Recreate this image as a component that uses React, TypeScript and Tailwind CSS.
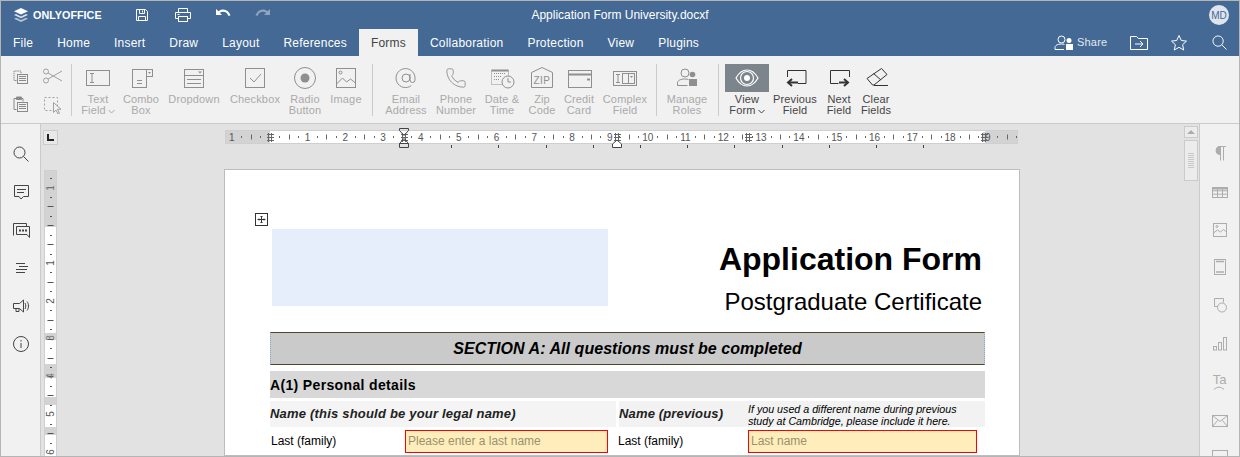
import React from "react";
import { Phone } from "lucide-react";

const Ico = ({ w = 32, h = 28, children, className = "" }: { w?: number; h?: number; children: React.ReactNode; className?: string }) => (
  <svg width={w} height={h} viewBox={`0 0 ${w} ${h}`} fill="none" stroke="currentColor" strokeWidth={1} className={className}>
    {children}
  </svg>
);

const icons: Record<string, React.ReactNode> = {
  text: <Ico><rect x="4.5" y="6.5" width="23" height="15" /><path d="M8 9.5h4M10 9.5v9M8 18.5h4" /></Ico>,
  combo: (
    <Ico>
      <rect x="7.5" y="5.5" width="14" height="18" /><rect x="21.5" y="5.5" width="6" height="7" />
      <path d="M12 16.5h5M12 19.5h5" /><path d="M23 8h3l-1.5 2z" fill="currentColor" stroke="none" />
    </Ico>
  ),
  drop: (
    <Ico>
      <rect x="6.5" y="5.5" width="19" height="18" /><path d="M6.5 11.5h19M9 15.5h14M9 19.5h14" />
      <path d="M20 7.5h4l-2 2z" fill="currentColor" stroke="none" />
    </Ico>
  ),
  check: <Ico><rect x="6.5" y="4.5" width="19" height="19" /><path d="M11 14l4 4 7-8" /></Ico>,
  radio: <Ico><circle cx="16" cy="14" r="10.5" /><circle cx="16" cy="14" r="4.5" fill="currentColor" stroke="none" /></Ico>,
  image: <Ico><rect x="6.5" y="4.5" width="19" height="19" /><circle cx="10.5" cy="8.5" r="1.5" /><path d="M6.5 20l6-6 4 4 4-3 5 4" /></Ico>,
  email: <Ico><circle cx="16" cy="14" r="4" /><path d="M20 10v6a2.5 2.5 0 0 0 5 0v-2a9.5 9.5 0 1 0-3.7 7.6" /></Ico>,
  phone: <Phone size={22} strokeWidth={1} className="mt-[3px]" />,
  date: (
    <Ico>
      <rect x="5.5" y="6.5" width="17" height="14" strokeDasharray="1 1" /><path d="M5.5 6.5h17" strokeWidth="2" />
      <path d="M8 9.5h11M8 12.5h8M8 15.5h6" strokeDasharray="1 1" />
      <circle cx="22" cy="18" r="6" fill="#f1f1f1" /><path d="M22 14v4h3" />
    </Ico>
  ),
  zip: (
    <Ico>
      <path d="M5.5 23.5V8.5L16 3.5l10.5 5v15z" />
      <text x="16" y="20" textAnchor="middle" fontSize="10" fill="currentColor" stroke="none" letterSpacing="0.5">ZIP</text>
    </Ico>
  ),
  credit: <Ico><rect x="5.5" y="6.5" width="23" height="17" /><path d="M5.5 10.5h23" strokeWidth="2" /><path d="M24 15.5h3" strokeWidth="2" /></Ico>,
  complex: (
    <Ico>
      <rect x="4.5" y="7.5" width="23" height="14" /><path d="M7 10.5h4M9 10.5v8M7 18.5h4" />
      <rect x="13.5" y="9.5" width="6" height="10" /><rect x="19.5" y="9.5" width="6" height="10" />
      <path d="M21 12h3l-1.5 2z" fill="currentColor" stroke="none" />
    </Ico>
  ),
  roles: (
    <Ico>
      <circle cx="14" cy="9" r="4" /><path d="M6.5 21.5v-2.5c0-2.5 3-4 7.5-4 1.5 0 2.5.1 3.5.5M6.5 21.5h10" />
      <circle cx="21.5" cy="10.5" r="2.8" fill="currentColor" stroke="none" /><rect x="18" y="15" width="8" height="7" fill="currentColor" stroke="none" />
    </Ico>
  ),
  view: (
    <Ico>
      <path d="M5 14c3-5.5 7-8 11-8s8 2.5 11 8c-3 5.5-7 8-11 8s-8-2.5-11-8z" strokeWidth="1.2" />
      <circle cx="16" cy="14" r="6.5" strokeWidth="1.2" /><circle cx="16" cy="14" r="3" fill="currentColor" stroke="none" />
    </Ico>
  ),
  prev: (
    <Ico>
      <path d="M8.5 13V6.5h18.5v13h-8" />
      <path d="M19 18.5H9.5" strokeWidth="2" /><path d="M13 15l-4 3.5 4 3.5" strokeWidth="2" />
    </Ico>
  ),
  next: (
    <Ico>
      <path d="M26.5 13V6.5H7.5v13h8" />
      <path d="M16 18.5h9" strokeWidth="2" /><path d="M21 15l4 3.5-4 3.5" strokeWidth="2" />
    </Ico>
  ),
  clear: <Ico><path d="M7 14.5L21.5 4.5l5.5 6-13 10.5h-1.5z" /><path d="M13.5 9.5l7.5 6.5M14 21.5h14" /></Ico>,
};

const first = [
  { i: "text", a: "Text", b: "Field", c: true, w: "w-[44px]" },
  { i: "combo", a: "Combo", b: "Box", w: "w-[42px]" },
  { i: "drop", a: "Dropdown", w: "w-[64px]" },
  { i: "check", a: "Checkbox", w: "w-[58px]" },
  { i: "radio", a: "Radio", b: "Button", w: "w-[42px]" },
  { i: "image", a: "Image", w: "w-[40px]" },
];

const Chev = () => (
  <svg width="7" height="5" viewBox="0 0 7 5" fill="none" stroke="currentColor" className="mt-[2px]"><path d="M.5 1l3 3 3-3" /></svg>
);

const Btn = ({ i, a, b, c, w, on, dark }: { i: string; a: string; b?: string; c?: boolean; w: string; on?: boolean; dark?: boolean }) => (
  <div className={`${w} flex flex-col items-center`}>
    <div className={`h-[28px] w-full flex justify-center ${on ? "bg-[#7d858c] text-white" : dark ? "text-[#333333]" : "text-[#8f8f8f]"}`}>{icons[i]}</div>
    <div className={`mt-[2px] text-[11px] leading-[11px] text-center whitespace-nowrap tracking-[0.15px] ${dark ? "text-[#444444]" : "text-[#aaaaaa]"}`}>
      <div className="h-[11px]">{a}</div>
      {b && <div className="h-[11px] flex justify-center items-center gap-[2px]">{b}{c && <Chev />}</div>}
    </div>
  </div>
);

const Sep = ({ cls }: { cls: string }) => <div className={`w-px h-[52px] bg-[#cbcbcb] shrink-0 ${cls}`} />;

const ClipIcons = () => (
  <div className="w-[70px] shrink-0 grid grid-cols-2 grid-rows-[20px_20px] content-start gap-y-[8px] mt-[2px] pl-[6px] text-[#8a8a8a]">
    <svg width="30" height="20" viewBox="0 0 30 20" fill="none" stroke="currentColor">
      <path d="M9.5 14.5h-2.500v-9.500h7v3" strokeDasharray="1.5 .7" /><rect x="10.5" y="8.5" width="10" height="9" /><path d="M12 10.5h7M12 12.5h7M12 14.5h7" />
    </svg>
    <svg width="30" height="20" viewBox="2 0 30 20" fill="none" stroke="#a0a0a0">
      <circle cx="9" cy="5.5" r="2.5" /><circle cx="9" cy="14.5" r="2.5" /><path d="M11 7l14 8M11 13l14-8" />
    </svg>
    <svg width="30" height="20" viewBox="0 0 30 20" fill="none" stroke="currentColor">
      <path d="M9.5 15.500h-2.500v-11h9v3" /><path d="M9.5 3h5v2.500h-5z" fill="currentColor" /><rect x="10.5" y="8.500" width="10" height="9" /><path d="M12 10.500h7M12 12.500h7M12 14.500h7" />
    </svg>
    <svg width="30" height="20" viewBox="0 0 30 20" fill="none" stroke="#a0a0a0">
      <rect x="5.5" y="3.5" width="13" height="13" strokeDasharray="2 2" /><path d="M14.5 8.5v10l2.500-2.500 2 4 1.500-.7-2-4h3.500z" fill="#f1f1f1" />
    </svg>
  </div>
);

const Ruler = () => {
  const o = 269.7 - 225;
  const s = 37.8;
  const nums = [-1, 1, 2, 3, 4, 5, 6, 7, 8, 9, 10, 11, 12, 13, 14, 15, 16, 17, 18, 19];
  const ticks: number[] = [];
  for (let k = -1; k < 20; k++) ticks.push(k);
  const hatch = [45, 179, 392, 523, 759];
  return (
    <svg width="795" height="24" viewBox="0 0 795 24" className="block overflow-visible" fontFamily="'Liberation Sans', sans-serif">
      <rect x=".5" y="2.5" width="792" height="13" fill="#ffffff" stroke="#cfcfcf" />
      <rect x="1" y="3" width="44" height="12" fill="#d3d3d3" />
      <rect x="760" y="3" width="32" height="12" fill="#d3d3d3" />
      {ticks.map((k) => {
        const x = o + k * s;
        return (
          <g key={k} stroke="#666666">
            {x + 9.45 > 0 && x + 9.45 < 792 && <path d={`M${Math.round(x + 9.45) + 0.5} 8v2`} />}
            {x + 18.9 > 0 && x + 18.9 < 792 && <path d={`M${Math.round(x + 18.9) + 0.5} 6.5v5`} />}
            {x + 28.35 > 0 && x + 28.35 < 792 && <path d={`M${Math.round(x + 28.35) + 0.5} 8v2`} />}
          </g>
        );
      })}
      {nums.map((n) => (
        <g key={n}>
          <rect x={o + n * s - 5} y="4" width="10" height="10" fill={n === -1 || n === 19 ? "#d3d3d3" : "#ffffff"} />
          <text x={o + n * s} y="13" fontSize="10" textAnchor="middle" fill="#555555">{n < 0 ? 1 : n === 19 ? 9 : n}</text>
        </g>
      ))}
      {hatch.map((x) => (
        <path key={x} d={`M${x - 3} 6.5h7M${x - 3} 9.5h7M${x - 3} 12.5h7M${x - 1.5} 5v9M${x + 1.5} 5v9`} stroke="#666666" fill="none" />
      ))}
      <path d="M174.5 .5h9v2l-4.5 5-4.5-5z M174.5 15.5l4.5-5 4.5 5v4h-9z M174.5 15.5h9" fill="none" stroke="#444444" />
      <path d="M387.5 19.5v-3.5l4.5-4 4.5 4v3.5z" fill="#fff" stroke="#444444" />
      {[226, 273, 321, 368, 415, 462, 509, 557, 604, 651, 698].map((x) => (
        <path key={x} d={`M${x + 0.5} 17v3`} stroke="#444444" />
      ))}
    </svg>
  );
};

const VRuler = () => {
  const white = [[227, 333], [340, 364], [378, 397], [405, 427], [435, 460]];
  const base = 170;
  const nums: [number, string, string][] = [
    [188, "1", "#777777"], [263, "1", "#555555"], [301, "2", "#555555"], [338, "3", "#777777"], [376, "4", "#777777"], [414, "5", "#555555"], [452, "6", "#555555"],
  ];
  const ticks: number[] = [];
  for (let y = 178; y < 460; y += 9.45) ticks.push(y);
  return (
    <svg width="13" height="290" viewBox="0 0 13 290" className="block shrink-0" fontFamily="'Liberation Sans', sans-serif">
      <rect x=".5" y=".5" width="12" height="295" fill="#d3d3d3" stroke="#cfcfcf" />
      <path d="M1 200h11" stroke="#cfcfcf" />
      {white.map(([a, b]) => <rect key={a} x="1" y={a - base} width="11" height={b - a} fill="#ffffff" />)}
      {ticks.map((y, idx) => (
        <path key={idx} d={idx % 2 === 1 ? `M3.5 ${Math.round(y - base) + 0.5}h6` : `M6 ${Math.round(y - base) + 0.5}h2`} stroke="#555555" />
      ))}
      {nums.map(([y, t, c]) => (
        <g key={y}>
          <rect x="2" y={y - base - 4} width="9" height="9" fill={y === 338 || y === 376 || y === 188 ? "transparent" : "#ffffff"} />
          <text transform={`translate(10 ${y - base}) rotate(-90)`} fontSize="10" textAnchor="middle" fill={c}>{t}</text>
        </g>
      ))}
    </svg>
  );
};

const LeftIcon = ({ children }: { children: React.ReactNode }) => (
  <div className="h-[38px] shrink-0 flex items-center justify-center text-[#444444]">{children}</div>
);
const RightIcon = ({ children }: { children: React.ReactNode }) => (
  <div className="h-[38px] shrink-0 flex flex-col items-center justify-center leading-none">{children}</div>
);
const S = ({ children, size = 20 }: { children: React.ReactNode; size?: number }) => (
  <svg width={size} height={size} viewBox="0 0 20 20" fill="none" stroke="currentColor">{children}</svg>
);

export default function App() {
  return (
    <div className="w-[1240px] h-[457px] overflow-hidden border border-[#b5b5b5] flex flex-col bg-[#f1f1f1] font-['Liberation_Sans',Arial,sans-serif]">
      {/* top */}
      <div className="bg-[#446995] text-white h-[55px] shrink-0 flex flex-col">
        <div className="h-[28px] flex items-center relative">
          <div className="pl-[12px] flex items-center gap-[4px] w-[126px]">
            <svg width="16" height="16" viewBox="0 0 16 16" fill="#fff">
              <path d="M8 1l7 3.2-7 3.3-7-3.3z" />
              <path d="M3 7l5 2.4L13 7l2 1-7 3.3L1 8z" opacity=".8" />
              <path d="M3 10.7l5 2.3 5-2.3 2 1-7 3.3-7-3.3z" opacity=".6" />
            </svg>
            <span className="text-[10.8px] font-bold">ONLYOFFICE</span>
          </div>
          <div className="flex">
            <div className="w-[30px] flex justify-center">
              <svg width="16" height="16" viewBox="0 0 16 16" fill="none" stroke="#fff"><path d="M2.5 2.5h9l2 2v9h-11z" /><path d="M5.5 2.5v4h5v-4M4.5 13.5v-4h7v4M8.5 3.5v2" /></svg>
            </div>
            <div className="w-[41px] ml-[5px] flex justify-center">
              <svg width="18" height="16" viewBox="0 0 18 16" fill="none" stroke="#fff"><path d="M4.5 5.5v-4h9v4M4.5 11.5h-3v-6h15v6h-3" /><rect x="4.5" y="9.5" width="9" height="5" /><path d="M3.5 7.5h2" /></svg>
            </div>
            <div className="w-[40px] flex justify-center">
              <svg width="16" height="12" viewBox="0 0 16 12" fill="#fff"><path d="M1 2v6h6L4.8 5.8C6 5 7 4.7 8.2 4.7c2.4 0 4.4 1.5 5.3 4.3l2-.7C14.2 4.600 11.500 2.400 8.200 2.400c-1.800 0-3.300.6-4.700 1.900z" /></svg>
            </div>
            <div className="w-[40px] flex justify-center opacity-40">
              <svg width="16" height="12" viewBox="0 0 16 12" fill="#fff" className="-scale-x-100"><path d="M1 2v6h6L4.8 5.8C6 5 7 4.7 8.2 4.7c2.4 0 4.4 1.5 5.3 4.3l2-.7C14.2 4.600 11.500 2.400 8.200 2.400c-1.800 0-3.300.6-4.700 1.900z" /></svg>
            </div>
          </div>
          <div className="absolute left-0 right-0 top-[7px] text-center text-[12px] leading-[14px]">Application Form University.docxf</div>
          <div className="ml-auto mr-[10px] w-[20px] h-[20px] rounded-full bg-[#dfe5ee] text-[#446995] text-[10px] flex items-center justify-center">MD</div>
        </div>
        <div className="h-[27px] flex text-[12px]">
          {["File", "Home", "Insert", "Draw", "Layout", "References", "Forms", "Collaboration", "Protection", "View", "Plugins"].map((t) => (
            <div key={t} className={`px-[12px] flex items-center tracking-[0.21px] ${t === "Forms" ? "bg-[#f1f1f1] text-[#444444]" : "text-white"}`}>{t}</div>
          ))}
          <div className="ml-auto flex items-center pr-[12px]">
            <svg width="20" height="16" viewBox="0 0 20 16" fill="none" stroke="#fff">
              <circle cx="7.5" cy="4.5" r="3.5" /><path d="M1 14.5v-2c0-2 2.5-3.500 6.500-3.500 1 0 2 .1 3 .4M1 14.500h9" />
              <circle cx="15" cy="5.500" r="2.500" fill="#fff" stroke="none" /><rect x="12" y="9" width="7" height="6" fill="#fff" stroke="none" />
            </svg>
            <span className="ml-[3px] text-[11px] text-[#e3e8ef] tracking-[0.2px] w-[30px]">Share</span>
            <svg width="18" height="14" viewBox="0 0 18 14" fill="none" stroke="#fff" className="ml-[23px]"><path d="M.5 13.500V.5h6l2 2h9v11z" /><path d="M5 8h8M10 5l3 3-3 3" /></svg>
            <svg width="18" height="18" viewBox="0 0 18 18" fill="none" stroke="#fff" className="ml-[22px]"><path d="M9 1.500l2.300 5 5.200.6-3.900 3.600 1.100 5.300L9 13.300 4.300 16l1.100-5.300L1.500 7.100l5.200-.6z" /></svg>
            <svg width="15" height="15" viewBox="0 0 16 16" fill="none" stroke="#fff" className="ml-[24px]"><circle cx="6.500" cy="6.500" r="5.500" /><path d="M10.500 10.500l5 5" /></svg>
          </div>
        </div>
      </div>

      {/* toolbar */}
      <div className="h-[68px] shrink-0 flex pt-[8px] border-b border-[#cbcbcb] bg-[#f1f1f1]">
        <ClipIcons />
        <Sep cls="" />
        <div className="flex pl-[4px]">
          {first.map((it) => <Btn key={it.a} {...it} />)}
        </div>
        <Sep cls="ml-[6px]" />
        <div className="flex pl-[9px]">
          <Btn i="email" a="Email" b="Address" w="w-[48px]" />
          <Btn i="phone" a="Phone" b="Number" w="w-[52px]" />
          <Btn i="date" a="Date &" b="Time" w="w-[40px]" />
          <Btn i="zip" a="Zip" b="Code" w="w-[40px]" />
          <Btn i="credit" a="Credit" b="Card" w="w-[34px]" />
          <Btn i="complex" a="Complex" b="Field" w="w-[58px]" />
        </div>
        <Sep cls="ml-[2px]" />
        <div className="flex pl-[8px]"><Btn i="roles" a="Manage" b="Roles" w="w-[44px]" /></div>
        <Sep cls="ml-[9px]" />
        <div className="flex pl-[6px]">
          <Btn i="view" a="View" b="Form" c on dark w="w-[44px]" />
          <Btn i="prev" a="Previous" b="Field" dark w="w-[52px]" />
          <Btn i="next" a="Next" b="Field" dark w="w-[36px]" />
          <Btn i="clear" a="Clear" b="Fields" dark w="w-[38px]" />
        </div>
      </div>

      {/* main */}
      <div className="flex-1 flex min-h-0">
        <div className="w-[40px] shrink-0 border-r border-[#cbcbcb] flex flex-col pt-[11px]">
          <LeftIcon><S><circle cx="8.5" cy="8.5" r="5.5" /><path d="M12.5 12.5l5 5" /></S></LeftIcon>
          <LeftIcon><S><path d="M3.5 3.5h14v11h-5l-2.5 2.5-2-2.5h-4.5z" /><path d="M6 7.5h9M6 10.500h7" /></S></LeftIcon>
          <LeftIcon><S><path d="M2.500 15.500v-12h13v3" /><path d="M5.500 6.500h13v11l-2.500-3h-10.500z" /><path d="M8 10.500h2M11 10.500h2M14 10.500h2" strokeWidth="2" /></S></LeftIcon>
          <LeftIcon><S><path d="M5 5.500h9M8 8.500h9M5 11.500h11M5 14.500h9" /></S></LeftIcon>
          <LeftIcon><S><path d="M2.500 7.500h6l4-3.500v12l-4-3.500h-6zM5 12.500v3h3v-3M14 7c1 1.500 1 4.500 0 6M16 5.500c2 2.500 2 6.500 0 9" /></S></LeftIcon>
          <LeftIcon><S><circle cx="10" cy="10" r="7.500" /><path d="M10 9v5M10 6v1.500" /></S></LeftIcon>
        </div>

        <div className="flex-1 min-w-0 bg-[#e2e2e2] flex overflow-hidden">
          <div className="w-[20px] shrink-0 pt-[6px] flex flex-col items-start pl-[2px]">
            <div className="w-[15px] h-[15px] shrink-0 border border-[#cbcbcb] bg-[#e8e8e8] flex items-center justify-center">
              <div className="w-[7px] h-[7px] border-l-[2px] border-b-[2px] border-[#222222]" />
            </div>
            <div className="mt-[25px] ml-[1px] shrink-0"><VRuler /></div>
          </div>
          <div className="w-[163px] shrink-0" />
          <div className="w-[796px] shrink-0 pt-[4px] flex flex-col">
            <div className="pl-[1px] h-[41px] shrink-0"><Ruler /></div>
            <div className="bg-white border border-[#bdbdbd] flex-1 pl-[45px] pr-[34px] pt-[59px] relative text-black">
              <svg width="13" height="13" viewBox="0 0 13 13" fill="none" stroke="#333333" className="absolute left-[30px] top-[43px]">
                <rect x=".5" y=".5" width="12" height="12" /><path d="M6.500 3v7M3 6.500h7M5.500 4l1-1 1 1M5.500 9l1 1 1-1M4 5.500l-1 1 1 1M9 5.500l1 1-1 1" />
              </svg>
              <div className="flex h-[103px]">
                <div className="ml-[2px] w-[336px] h-[77px] bg-[#e7eefb]" />
                <div className="flex-1 flex flex-col items-end pr-[3px]">
                  <div className="text-[32px] leading-[37px] font-bold mt-[12px]">Application Form</div>
                  <div className="text-[24px] leading-[26px] mt-[11px]">Postgraduate Certificate</div>
                </div>
              </div>
              <div className="h-[33px] bg-[#cacaca] border-y border-y-[#4d4729] border-x border-x-[#8aa5c8] [border-left-style:dotted] [border-right-style:dotted] flex items-center justify-center text-[16px] font-bold italic tracking-[0.05px]">SECTION A: All questions must be completed</div>
              <div className="mt-[6px] h-[27px] bg-[#d8d8d8] flex items-center text-[14px] font-bold tracking-[0.35px] pt-[1px]">A(1) Personal details</div>
              <div className="mt-[3px] h-[26px] flex gap-[3px]">
                <div className="w-[346px] bg-[#f4f4f4] flex items-center text-[13px] font-bold italic tracking-[0.2px] text-[#222222]">Name (this should be your legal name)</div>
                <div className="flex-1 bg-[#f2f2f2] flex items-center">
                  <div className="w-[129px] text-[13px] font-bold italic tracking-[0.15px] text-[#222222]">Name (previous)</div>
                  <div className="text-[10.7px] leading-[12px] italic pt-[1px]">If you used a different name during previous<br />study at Cambridge, please include it here.</div>
                </div>
              </div>
              <div className="mt-[3px] h-[23px] flex items-center text-[12px]">
                <div className="w-[135px] pl-[1px] pb-[1px]">Last (family)</div>
                <div className="w-[203px] h-full border border-[#ff0000] bg-[#ffeebb] text-[#9b916e] pl-[2px] pb-[1px] flex items-center">Please enter a last name</div>
                <div className="w-[140px] pl-[10px] pb-[1px]">Last (family)</div>
                <div className="w-[229px] h-full border border-[#ff0000] bg-[#ffeebb] text-[#9b916e] pl-[2px] pb-[1px] flex items-center">Last name</div>
              </div>
            </div>
          </div>
          <div className="flex-1" />
          <div className="w-[14px] mr-[1px] shrink-0 pt-[2px] flex flex-col gap-[2px]">
            <div className="h-[12px] border border-[#cbcbcb] bg-[#ececec] flex items-center justify-center">
              <div className="w-0 h-0 border-x-[4px] border-x-transparent border-b-[4px] border-b-[#adadad]" />
            </div>
            <div className="h-[41px] border border-[#cbcbcb] bg-[#ececec] flex flex-col items-center justify-center gap-[1px]">
              {[0, 1, 2, 3, 4, 5, 6, 7].map((k) => <div key={k} className="w-[6px] h-px bg-[#c8c8c8]" />)}
            </div>
          </div>
        </div>

        <div className="w-[40px] shrink-0 border-l border-[#cbcbcb] flex flex-col items-center pt-[10px] text-[#adadad] overflow-hidden">
          <RightIcon><S><path d="M10.500 3.500v14M13.500 3.500v14M8 3.500h8" /><path d="M10 3.500a4 4 0 0 0 0 8z" fill="currentColor" /></S></RightIcon>
          <RightIcon><S><rect x="2.500" y="6.500" width="15" height="10" /><path d="M2.500 9.800h15M2.500 13.200h15M7.500 6.500v10M12.500 6.500v10" /><path d="M2.500 7.500h15" strokeWidth="2" /></S></RightIcon>
          <RightIcon><S><rect x="3.500" y="4.500" width="13" height="13" /><circle cx="7" cy="7.500" r="1" /><path d="M3.500 14l4-3 3 2 3-2.500 3 2.500" /></S></RightIcon>
          <RightIcon><S><rect x="4.500" y="2.500" width="11" height="15" /><path d="M6 4.500h8M6 15h8" strokeWidth="1.500" /></S></RightIcon>
          <RightIcon><S><path d="M9.500 11.500h-5V3.500h9v4" /><circle cx="12" cy="12.500" r="4.500" fill="#f1f1f1" /></S></RightIcon>
          <RightIcon><S><rect x="3.500" y="13.500" width="3" height="3.500" /><rect x="8.500" y="9.500" width="3" height="7.500" /><rect x="13.500" y="4.500" width="3" height="12.500" /></S></RightIcon>
          <RightIcon>
            <span className="text-[13px] leading-[13px] text-[#adadad]">Ta</span>
            <svg width="12" height="4" viewBox="0 0 12 4" fill="none" stroke="currentColor"><path d="M1 3.500c3-3 7-3 10 0" /></svg>
          </RightIcon>
          <RightIcon><S><rect x="2.500" y="6.500" width="15" height="11" /><path d="M2.500 6.500l7.500 6 7.500-6M2.500 17.500l5-6M17.500 17.500l-5-6" /></S></RightIcon>
          <RightIcon><S><rect x="2.500" y="3.500" width="15" height="13" /></S></RightIcon>
        </div>
      </div>
    </div>
  );
}
